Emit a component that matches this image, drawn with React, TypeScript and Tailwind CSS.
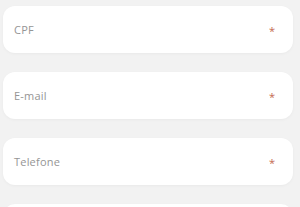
export default function App() {
  const fields = ["CPF", "E-mail", "Telefone", ""];
  return (
    <div
      className="w-[300px] h-[207px] overflow-hidden bg-[#f2f2f2] pt-[6px] pl-[3px] pr-[7px] flex flex-col gap-[19px]"
      style={{ fontFamily: "'Open Sans', 'Noto Sans', sans-serif" }}
    >
      {fields.map((f, i) => (
        <div
          key={i}
          className="h-[47px] shrink-0 rounded-[12px] bg-white shadow-[0_1px_3px_rgba(0,0,0,0.04)] flex items-center justify-between pl-[11px] pr-[18px]"
        >
          <span className="text-[11px] text-[#959595] tracking-[0.2px] mt-[1px]">{f}</span>
          {f && <span className="text-[11px] text-[#c4684f] mt-[4px]">*</span>}
        </div>
      ))}
    </div>
  );
}
